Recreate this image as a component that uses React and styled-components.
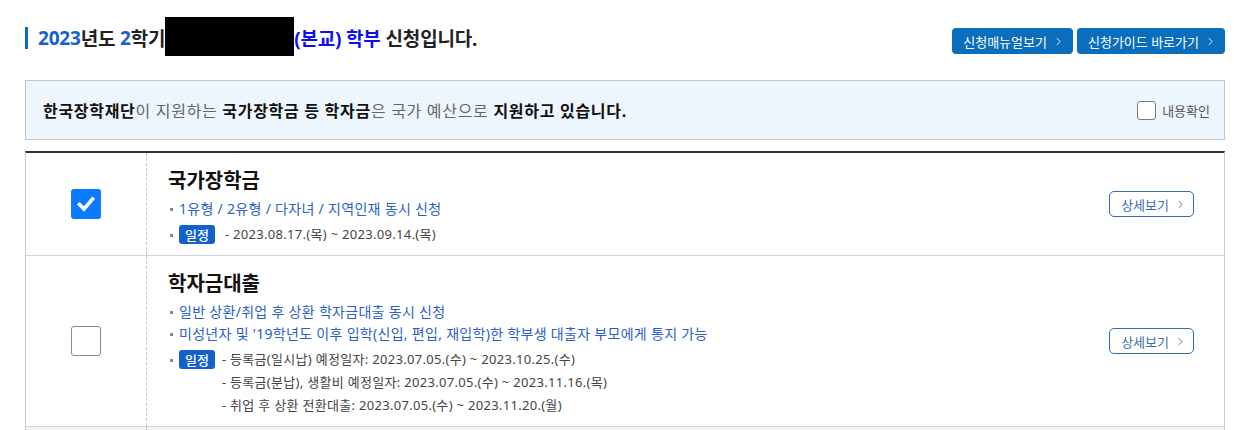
import styled, { createGlobalStyle } from 'styled-components';
import { ChevronRight } from 'lucide-react';

const GlobalStyle = createGlobalStyle`
  body {
    margin: 0;
    background: #fff;
    font-family: "Noto Sans", "Noto Sans CJK KR", sans-serif;
    color: #222;
    overflow: hidden;
  }
`;

const Page = styled.div`
  width: 1200px;
  padding-left: 25px;
`;

const Header = styled.div`
  display: flex;
  justify-content: space-between;
  align-items: flex-start;
  padding-top: 27px;
  height: 80px;
  box-sizing: border-box;
`;

const Title = styled.h2`
  margin: 0;
  display: flex;
  align-items: center;
  height: 22px;
  border-left: 3px solid #0a6ebd;
  padding-left: 10px;
  font-size: 19px;
  font-weight: 700;
  letter-spacing: -0.2px;
  color: #222;
  white-space: nowrap;
`;

const Num = styled.span`
  color: #1a5fcf;
`;

const Campus = styled.span`
  color: #1010ee;
  margin-right: 5px;
`;

const Redacted = styled.span`
  display: inline-block;
  width: 129px;
  height: 39px;
  background: #000;
  margin: -4px 0 0 0;
`;

const ButtonGroup = styled.div`
  display: flex;
  gap: 4px;
  margin-top: 1px;
`;

const LinkButton = styled.a`
  display: inline-flex;
  align-items: center;
  gap: 5px;
  height: 26px;
  padding: 0 8px 0 11px;
  background: #0a6ebd;
  border-radius: 4px;
  color: #fff;
  font-size: 13px;
  cursor: pointer;
`;

const Notice = styled.div`
  display: flex;
  justify-content: space-between;
  align-items: center;
  height: 60px;
  box-sizing: border-box;
  padding: 0 14px 0 17px;
  background: #eef6fd;
  border: 1px solid #c6c6c6;
  font-size: 16px;
  color: #666;
  letter-spacing: 0.7px;
`;

const Strong = styled.b`
  color: #111;
  font-weight: 700;
`;

const Confirm = styled.label`
  display: flex;
  align-items: center;
  gap: 6px;
  font-size: 13px;
  color: #555;
  letter-spacing: 0;
`;

const SmallBox = styled.span`
  width: 17px;
  height: 17px;
  background: #fff;
  border: 1px solid #7a7a7a;
  border-radius: 3px;
`;

const Table = styled.div`
  margin-top: 11px;
  border-top: 2px solid #333;
  border-left: 1px solid #ccc;
  border-right: 1px solid #ccc;
`;

const Row = styled.div`
  display: grid;
  grid-template-columns: 121px 1fr auto;
  border-bottom: 1px solid #d4d4d4;
  background: ${(p) => (p.$muted ? '#f3f3f3' : '#fff')};
  min-height: ${(p) => (p.$muted ? '20px' : '0')};
`;

const CheckCell = styled.div`
  display: flex;
  align-items: center;
  justify-content: center;
  border-right: 1px dashed #c8c8c8;
`;

const Check = styled.span`
  display: flex;
  align-items: center;
  justify-content: center;
  width: 30px;
  height: 30px;
  box-sizing: border-box;
  border-radius: 3px;
  background: ${(p) => (p.$on ? '#0a7bff' : '#fff')};
  border: ${(p) => (p.$on ? 'none' : '1px solid #8a8a8a')};
`;

const Content = styled.div`
  padding: 16px 0 9px 21px;
`;

const ItemTitle = styled.h3`
  margin: 0 0 5px;
  font-size: 20px;
  line-height: 24px;
  font-weight: 700;
  color: #111;
`;

const List = styled.ul`
  margin: 0;
  padding: 0;
  list-style: none;
`;

const Item = styled.li`
  position: relative;
  padding-left: 11px;
  font-size: 14px;
  letter-spacing: 0.3px;
  line-height: 22px;
  color: ${(p) => (p.$plain ? '#444' : '#2a5fc9')};
  margin-top: ${(p) => (p.$gap ? '4px' : '0')};
  display: flex;
  align-items: flex-start;

  &::before {
    content: '';
    position: absolute;
    left: 2px;
    top: 10px;
    width: 3px;
    height: 3px;
    background: #888;
  }
`;

const Badge = styled.span`
  display: inline-flex;
  align-items: center;
  justify-content: center;
  height: 19px;
  padding: 0 6px;
  margin-top: 1px;
  border-radius: 3px;
  background: #1262c9;
  color: #fff;
  font-size: 13px;
  font-weight: 500;
  letter-spacing: 0;
  flex-shrink: 0;
`;

const Dates = styled.div`
  margin-left: ${(p) => p.$indent};
  display: flex;
  flex-direction: column;
  color: #444;
  font-size: 13px;
  letter-spacing: 0.3px;
  line-height: 23px;
  margin-top: -1px;
`;

const ActionCell = styled.div`
  display: flex;
  align-items: center;
  padding: 0 30px 0 20px;
`;

const DetailButton = styled.a`
  display: inline-flex;
  align-items: center;
  gap: 5px;
  height: 26px;
  box-sizing: border-box;
  padding: 0 6px 0 11px;
  border: 1px solid #2d6fb0;
  border-radius: 5px;
  background: #fff;
  color: #3a6daa;
  font-size: 13px;
  cursor: pointer;
`;

const CheckMark = () => (
  <svg width="20" height="20" viewBox="0 0 20 20">
    <path d="M3.5 10.5 L8 15 L16.5 5" fill="none" stroke="#fff" strokeWidth="3.6" strokeLinecap="square" />
  </svg>
);

const Detail = () => (
  <DetailButton>
    상세보기 <ChevronRight size={13} strokeWidth={1.6} />
  </DetailButton>
);

export default function App() {
  return (
    <>
      <GlobalStyle />
      <Page>
        <Header>
          <Title>
            <Num>2023</Num>년도&nbsp;<Num>2</Num>학기
            <Redacted />
            <Campus>(본교) 학부</Campus> 신청입니다.
          </Title>
          <ButtonGroup>
            <LinkButton>
              신청매뉴얼보기 <ChevronRight size={13} strokeWidth={1.6} />
            </LinkButton>
            <LinkButton>
              신청가이드 바로가기 <ChevronRight size={13} strokeWidth={1.6} />
            </LinkButton>
          </ButtonGroup>
        </Header>

        <Notice>
          <div>
            <Strong>한국장학재단</Strong>이 지원하는 <Strong>국가장학금 등 학자금</Strong>은 국가 예산으로{' '}
            <Strong>지원하고 있습니다.</Strong>
          </div>
          <Confirm>
            <SmallBox />
            내용확인
          </Confirm>
        </Notice>

        <Table>
          <Row>
            <CheckCell>
              <Check $on>
                <CheckMark />
              </Check>
            </CheckCell>
            <Content>
              <ItemTitle>국가장학금</ItemTitle>
              <List>
                <Item>1유형 / 2유형 / 다자녀 / 지역인재 동시 신청</Item>
                <Item $plain $gap>
                  <Badge>일정</Badge>
                  <Dates $indent="10px">
                    <span>- 2023.08.17.(목) ~ 2023.09.14.(목)</span>
                  </Dates>
                </Item>
              </List>
            </Content>
            <ActionCell>
              <Detail />
            </ActionCell>
          </Row>

          <Row>
            <CheckCell>
              <Check />
            </CheckCell>
            <Content>
              <ItemTitle>학자금대출</ItemTitle>
              <List>
                <Item>일반 상환/취업 후 상환 학자금대출 동시 신청</Item>
                <Item>미성년자 및 '19학년도 이후 입학(신입, 편입, 재입학)한 학부생 대출자 부모에게 통지 가능</Item>
                <Item $plain $gap>
                  <Badge>일정</Badge>
                  <Dates $indent="7px">
                    <span>- 등록금(일시납) 예정일자: 2023.07.05.(수) ~ 2023.10.25.(수)</span>
                    <span>- 등록금(분납), 생활비 예정일자: 2023.07.05.(수) ~ 2023.11.16.(목)</span>
                    <span>- 취업 후 상환 전환대출: 2023.07.05.(수) ~ 2023.11.20.(월)</span>
                  </Dates>
                </Item>
              </List>
            </Content>
            <ActionCell>
              <Detail />
            </ActionCell>
          </Row>

          <Row $muted>
            <CheckCell />
            <div />
            <div />
          </Row>
        </Table>
      </Page>
    </>
  );
}
